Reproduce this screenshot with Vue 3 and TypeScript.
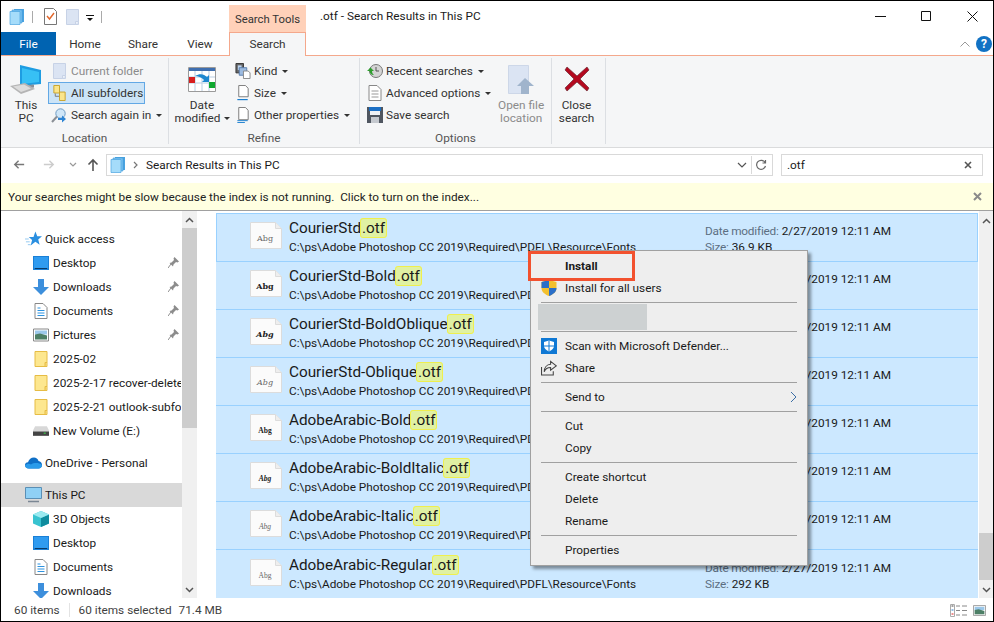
<script setup lang="ts">
const path = 'C:\\ps\\Adobe Photoshop CC 2019\\Required\\PDFL\\Resource\\Fonts'

const quick = [
  { label: 'Desktop', icon: 'desktop', pin: true },
  { label: 'Downloads', icon: 'down', pin: true },
  { label: 'Documents', icon: 'docs', pin: true },
  { label: 'Pictures', icon: 'pics', pin: true },
  { label: '2025-02', icon: 'folder', pin: false },
  { label: '2025-2-17 recover-deleted-files', icon: 'folder', pin: false },
  { label: '2025-2-21 outlook-subfolders', icon: 'folder', pin: false },
  { label: 'New Volume (E:)', icon: 'drive', pin: false },
]

const pcItems = [
  { label: '3D Objects', icon: 'cube' },
  { label: 'Desktop', icon: 'desktop' },
  { label: 'Documents', icon: 'docs' },
  { label: 'Downloads', icon: 'down' },
]

const files = [
  { name: 'CourierStd', size: '36.9 KB', face: 'mono' },
  { name: 'CourierStd-Bold', size: '', face: 'mono bold' },
  { name: 'CourierStd-BoldOblique', size: '', face: 'mono bold oblique' },
  { name: 'CourierStd-Oblique', size: '', face: 'mono oblique' },
  { name: 'AdobeArabic-Bold', size: '', face: 'arabic bold' },
  { name: 'AdobeArabic-BoldItalic', size: '', face: 'arabic bold oblique' },
  { name: 'AdobeArabic-Italic', size: '', face: 'arabic oblique' },
  { name: 'AdobeArabic-Regular', size: '292 KB', face: 'arabic' },
]
</script>

<template>
  <div class="win">
    <svg class="defs" aria-hidden="true">
      <symbol id="i-results" viewBox="0 0 16 16">
        <path d="M5 0h10v13H5z" fill="#4aa3e0" /><path d="M3 1h10v13H3z" fill="#7cc4f2" stroke="#3f9ad8" stroke-width=".6" />
        <path d="M1 2.500h10v13H1z" fill="#a5dcfa" stroke="#4aa3e0" stroke-width=".7" />
      </symbol>
      <symbol id="i-check" viewBox="0 0 13 17">
        <path d="M.5.500h9l3 3v13H.5z" fill="#fff" stroke="#777" /><path d="M3 8l2.500 3L10 5" fill="none" stroke="#e2662a" stroke-width="1.400" />
      </symbol>
      <symbol id="i-page" viewBox="0 0 13 16">
        <path d="M.5.500h12v15H.5z" fill="#dbe4f3" stroke="#c7d2e6" /><path d="M9.500 15.500v-3h3" fill="#eef2f9" stroke="#c7d2e6" />
      </symbol>
      <symbol id="i-pc" viewBox="0 0 34 30">
        <path d="M11 0l21 5v14l-21 2z" fill="#1e9de2" /><path d="M13 3l17 4v10l-17 2z" fill="#37c0f5" />
        <path d="M19 20l6-.6v3l-6 1z" fill="#8a9099" /><path d="M1 21l15-3 10 6-14 5z" fill="#b5b5b5" />
        <path d="M4 21.500l11-2 7 4-10 3.500z" fill="#dcdcdc" />
      </symbol>
      <symbol id="i-subs" viewBox="0 0 13 17">
        <path d="M.5.500h6v8h-6z" fill="#fbe58a" stroke="#c9a227" /><path d="M6.500 7.500h6v9h-6z" fill="#fbe58a" stroke="#c9a227" />
        <path d="M2 9v3h4" fill="none" stroke="#777" />
      </symbol>
      <symbol id="i-again" viewBox="0 0 16 15">
        <circle cx="9.500" cy="5.500" r="4.700" fill="#cfe6f8" stroke="#6f9cc4" /><path d="M6 8.500L1 14" stroke="#8a8f96" stroke-width="2" />
        <path d="M7 10h4V7.500l4 3.500-4 3.500V12H7z" fill="#2d84d4" />
      </symbol>
      <symbol id="i-cal" viewBox="0 0 28 25">
        <path d="M.5.500h27v24H.5z" fill="#fff" stroke="#9a9a9a" /><path d="M1 1h26v3H1z" fill="#3f6fb0" />
        <path d="M1 10h26M1 16h26M7 4v20M14 4v20M21 4v20" stroke="#b9cde2" fill="none" />
        <path d="M1 10h6v6H1z" fill="#d81e1e" /><path d="M21 15h6v6h-6z" fill="#10a82f" />
        <path d="M7 9c5-3 9-2 12 1l2-2v7h-7l2-2c-3-3-6-4-9-4z" fill="#1d87cf" />
      </symbol>
      <symbol id="i-kind" viewBox="0 0 16 17">
        <path d="M.5.500h8v10h-8z" fill="#666" stroke="#333" /><path d="M2.500 2.500h4v5h-4z" fill="#bcd3ee" />
        <path d="M4 5h8v8H4z" fill="#9dbbe0" stroke="#5a7fae" /><path d="M8.500 8.500h5l2 2v6h-7z" fill="#fff" stroke="#888" />
      </symbol>
      <symbol id="i-size" viewBox="0 0 12 17">
        <path d="M1.500.500h7l3 3v9h-10z" fill="#fff" stroke="#777" /><path d="M0 15.500h11" stroke="#1b7fd0" stroke-width="1.300" />
      </symbol>
      <symbol id="i-other" viewBox="0 0 12 17">
        <path d="M1.500.500h7l3 3v10h-10z" fill="#fff" stroke="#777" /><path d="M0 14.500h11M0 16.500h8" stroke="#1b7fd0" />
      </symbol>
      <symbol id="i-recent" viewBox="0 0 16 16">
        <circle cx="9" cy="8" r="6.500" fill="#d4d4d4" stroke="#777" /><path d="M9 4v4h3" fill="none" stroke="#555" />
        <path d="M0 8l3.500-3.500L7 8H5c0 2 1 3 2 4-3 0-4.500-2-4.500-4z" fill="#2e9e2e" />
      </symbol>
      <symbol id="i-adv" viewBox="0 0 13 16">
        <path d="M.5.500h8l4 4v11H.5z" fill="#fff" stroke="#888" /><path d="M3 6h7M3 9h7M3 12h7" stroke="#999" />
      </symbol>
      <symbol id="i-save" viewBox="0 0 16 16">
        <path d="M0 0h16v16H0z" fill="#4f5660" /><path d="M2 0h12v4H2z" fill="#1b6fc4" /><path d="M3 4h10v4H3z" fill="#eef1f5" /><path d="M4 10h8v6H4z" fill="#c5c9cf" />
      </symbol>
      <symbol id="i-open" viewBox="0 0 27 29">
        <path d="M.5.500h20v28H.5z" fill="#dbe4f3" stroke="#cdd7e8" /><path d="M17 13l9 8h-5v8h-8v-8H9z" fill="#a0b4cc" />
      </symbol>
      <symbol id="i-close" viewBox="0 0 26 26">
        <path d="M3 1l10 9 10-9 2 3-9 9 9 9-2 3-10-9-10 9-2-3 9-9-9-9z" fill="#b4091f" stroke="#6d2b33" stroke-width=".7" />
      </symbol>
      <symbol id="i-star" viewBox="0 0 18 16">
        <path d="M11 0l2 5h5l-4 3.500L15.500 14 11 11l-5 4 1.500-6L4 6h5z" fill="#2a8fe0" /><path d="M0 8h4M1 11h4M3 14h3" stroke="#8fc7f0" />
      </symbol>
      <symbol id="i-desktop" viewBox="0 0 16 14">
        <path d="M0 0h16v14H0z" fill="#1a7fd6" /><path d="M1 1h14v11H1z" fill="#2f9bf0" /><path d="M2 12.500h12" stroke="#0a3a66" />
      </symbol>
      <symbol id="i-down" viewBox="0 0 16 16">
        <path d="M5 0h6v8h5l-8 8-8-8h5z" fill="#3d8fdc" />
      </symbol>
      <symbol id="i-docs" viewBox="0 0 13 16">
        <path d="M.5.500h8l4 4v11H.5z" fill="#fff" stroke="#888" /><path d="M3 5h3M3 7.500h7M3 10h7M3 12.500h7" stroke="#2d93e0" />
      </symbol>
      <symbol id="i-pics" viewBox="0 0 16 13">
        <path d="M.5.500h15v12H.5z" fill="#fff" stroke="#888" /><path d="M2 2h12v4H2z" fill="#9cc8ea" /><path d="M2 6l5-1 7 2v4H2z" fill="#4d7f66" />
      </symbol>
      <symbol id="i-folder" viewBox="0 0 13 16">
        <path d="M.5.500h12v15H.5z" fill="#fde78f" stroke="#e6bc45" /><path d="M10.500 15.500v-4h2" fill="#f7d774" stroke="#e6bc45" />
      </symbol>
      <symbol id="i-drive" viewBox="0 0 15 9">
        <path d="M2 0h11l2 4v5H0V4z" fill="#d8d8d8" /><path d="M0 5h15v4H0z" fill="#444" /><path d="M10 6.500h2" stroke="#3dd34a" />
      </symbol>
      <symbol id="i-cloud" viewBox="0 0 17 11">
        <path d="M4 11C1 11 0 9 0 7.500 0 6 1.200 4.800 3 4.800 4 2 6 0 9 0c2 0 4 1.500 4.500 3.500C15.500 3.800 17 5.500 17 7.500S15.500 11 13.500 11z" fill="#0f6fc6" />
        <path d="M4 11C1 11 0 9 0 8c2-2 4-2 6-1 3-2 8-2 11 .5C17 9.500 15.500 11 13.500 11z" fill="#2a9bea" />
      </symbol>
      <symbol id="i-pcsmall" viewBox="0 0 17 16">
        <path d="M.5.500h16v11H.5z" fill="#8fd0f5" stroke="#5a8fb5" /><path d="M3 14.500h11" stroke="#7b8794" stroke-width="1.500" />
      </symbol>
      <symbol id="i-cube" viewBox="0 0 16 16">
        <path d="M8 0l8 3.500v9L8 16 0 12.500v-9z" fill="#38c3d0" /><path d="M8 7l8-3.500v9L8 16z" fill="#0f8c9e" /><path d="M8 0l8 3.500L8 7 0 3.500z" fill="#9beaf0" />
      </symbol>
      <symbol id="i-pin" viewBox="0 0 11 11">
        <path d="M6.500 0L11 4.500 9.500 5.500 8 5 5.500 7.500 5 9.500 1.500 6 3.500 5.500 6 3l-.5-1.500z" fill="#8c8c8c" /><path d="M0 11l3-4" stroke="#8c8c8c" />
      </symbol>
      <symbol id="i-shield" viewBox="0 0 15 16">
        <path d="M7.500 0L15 2v6c0 4-3.500 6.500-7.500 8C3.500 14.500 0 12 0 8V2z" fill="#f3c02e" />
        <path d="M7.500 0L0 2v6h7.500zM7.500 8v8c4-1.500 7.500-4 7.500-8z" fill="#2a6fc9" />
      </symbol>
      <symbol id="i-defender" viewBox="0 0 16 16">
        <path d="M0 0h16v16H0z" fill="#0f78d4" /><path d="M8 2.500l5 1.500v4c0 2.500-2.500 4.500-5 5.500-2.500-1-5-3-5-5.500V4z" fill="#fff" /><path d="M8 2.500v11M3 8h10" stroke="#0f78d4" />
      </symbol>
      <symbol id="i-share" viewBox="0 0 15 14">
        <path d="M.5 6v7.500h11V10" fill="none" stroke="#444" /><path d="M9 .8L14.300 5 9 9V6.600C6 6.600 4 8 3 10.500 3 6.500 5.500 3.800 9 3.500z" fill="none" stroke="#444" />
      </symbol>
    </svg>

    <header class="title-bar">
      <div class="qat">
        <svg class="i16"><use href="#i-results" /></svg>
        <i class="qat-sep"></i>
        <svg class="i-check"><use href="#i-check" /></svg>
        <svg class="i-page-q"><use href="#i-page" /></svg>
        <svg class="qat-drop" viewBox="0 0 8 6"><path d="M0 .5h8" stroke="#111" fill="none" /><path d="M1 3h6L4 6z" fill="#111" /></svg>
        <i class="qat-sep"></i>
      </div>
      <div class="context-tab">Search Tools</div>
      <div class="title">.otf - Search Results in This PC</div>
      <div class="win-btns">
        <svg class="wb" viewBox="0 0 11 11"><path d="M0 5.500h11" stroke="#111" fill="none" /></svg>
        <svg class="wb" viewBox="0 0 11 11"><path d="M.5.500h9v9h-9z" stroke="#111" fill="none" /></svg>
        <svg class="wb" viewBox="0 0 11 11"><path d="M.5.500l10 10M10.500.500l-10 10" stroke="#111" fill="none" /></svg>
      </div>
    </header>

    <nav class="tabs">
      <div class="tab file">File</div>
      <div class="tab home">Home</div>
      <div class="tab share">Share</div>
      <div class="tab view">View</div>
      <div class="tab active">Search</div>
      <div class="tab-end">
        <svg class="collapse" viewBox="0 0 10 6"><path d="M.5 5.500L5 1l4.500 4.500" fill="none" stroke="#999" /></svg>
        <span class="help">?</span>
      </div>
    </nav>

    <section class="ribbon">
      <div class="group g-location">
        <div class="group-body">
          <div class="big b-pc">
            <div class="big-icon"><svg class="pc-ic"><use href="#i-pc" /></svg></div>
            <div>This<br />PC</div>
          </div>
          <div class="smalls">
            <div class="small off"><svg class="s-ic"><use href="#i-page" /></svg>Current folder</div>
            <div class="small on"><svg class="s-ic"><use href="#i-subs" /></svg>All subfolders</div>
            <div class="small again"><svg class="s-ic wide"><use href="#i-again" /></svg>Search again in<span class="caret"></span></div>
          </div>
        </div>
        <div class="group-label">Location</div>
      </div>

      <div class="group g-refine">
        <div class="group-body">
          <div class="big b-date">
            <div class="big-icon"><svg class="cal-ic"><use href="#i-cal" /></svg></div>
            <div>Date<br />modified<span class="caret"></span></div>
          </div>
          <div class="smalls refine">
            <div class="small"><svg class="r-ic"><use href="#i-kind" /></svg>Kind<span class="caret"></span></div>
            <div class="small"><svg class="r-ic"><use href="#i-size" /></svg>Size<span class="caret"></span></div>
            <div class="small"><svg class="r-ic"><use href="#i-other" /></svg>Other properties<span class="caret"></span></div>
          </div>
        </div>
        <div class="group-label">Refine</div>
      </div>

      <div class="group g-options">
        <div class="group-body">
          <div class="smalls options">
            <div class="small"><svg class="r-ic"><use href="#i-recent" /></svg>Recent searches<span class="caret"></span></div>
            <div class="small"><svg class="r-ic"><use href="#i-adv" /></svg>Advanced options<span class="caret"></span></div>
            <div class="small"><svg class="r-ic"><use href="#i-save" /></svg>Save search</div>
          </div>
          <div class="big b-open off">
            <div class="big-icon"><svg class="open-ic"><use href="#i-open" /></svg></div>
            <div>Open file<br />location</div>
          </div>
        </div>
        <div class="group-label">Options</div>
      </div>

      <div class="group g-close">
        <div class="group-body">
          <div class="big b-close">
            <div class="big-icon"><svg class="close-ic"><use href="#i-close" /></svg></div>
            <div>Close<br />search</div>
          </div>
        </div>
      </div>
    </section>

    <section class="nav-row">
      <svg class="nb back" viewBox="0 0 14 12"><path d="M13 6H2M6.500 1.500L2 6l4.500 4.500" fill="none" stroke="#777" stroke-width="1.600" /></svg>
      <svg class="nb fwd" viewBox="0 0 14 12"><path d="M1 6h11M7.500 1.500L12 6l-4.500 4.500" fill="none" stroke="#ccc" stroke-width="1.600" /></svg>
      <svg class="nb hist" viewBox="0 0 8 5"><path d="M1 1l3 3 3-3" fill="none" stroke="#999" stroke-width="1.200" /></svg>
      <svg class="nb up" viewBox="0 0 12 14"><path d="M6 13V2M1.500 6.500L6 2l4.500 4.500" fill="none" stroke="#555" stroke-width="1.600" /></svg>
      <div class="address">
        <svg class="i16 addr-ic"><use href="#i-results" /></svg>
        <svg class="crumb" viewBox="0 0 5 8"><path d="M1 1l3 3-3 3" fill="none" stroke="#777" stroke-width="1.200" /></svg>
        <span class="addr-text">Search Results in This PC</span>
        <svg class="addr-down" viewBox="0 0 10 6"><path d="M1 1l4 4 4-4" fill="none" stroke="#555" stroke-width="1.200" /></svg>
        <i class="addr-div"></i>
        <svg class="refresh" viewBox="0 0 12 12"><path d="M10 3.500A4.500 4.500 0 1 0 10.500 7M10.500 1v3h-3" fill="none" stroke="#666" stroke-width="1.200" /></svg>
      </div>
      <div class="search">
        <span>.otf</span>
        <svg class="search-x" viewBox="0 0 8 8"><path d="M1 1l6 6M7 1L1 7" stroke="#555" stroke-width="1.600" /></svg>
      </div>
    </section>

    <div class="notice">
      <span>Your searches might be slow because the index is not running.&nbsp; Click to turn on the index...</span>
      <svg class="notice-x" viewBox="0 0 9 9"><path d="M1 1l7 7M8 1L1 8" stroke="#8a8a8a" stroke-width="2" /></svg>
    </div>

    <main class="main">
      <aside class="side">
        <div class="tree">
          <div class="node top"><svg class="n-ic star"><use href="#i-star" /></svg><span>Quick access</span></div>
          <div v-for="q in quick" :key="q.label" class="node sub">
            <svg class="n-ic"><use :href="'#i-' + q.icon" /></svg>
            <span class="n-text">{{ q.label }}</span>
            <svg v-if="q.pin" class="pin"><use href="#i-pin" /></svg>
          </div>
          <div class="node top gap"><svg class="n-ic"><use href="#i-cloud" /></svg><span>OneDrive - Personal</span></div>
          <div class="node top gap current"><svg class="n-ic"><use href="#i-pcsmall" /></svg><span>This PC</span></div>
          <div v-for="p in pcItems" :key="p.label" class="node sub">
            <svg class="n-ic"><use :href="'#i-' + p.icon" /></svg>
            <span class="n-text">{{ p.label }}</span>
          </div>
        </div>
        <div class="bar side-bar">
          <svg class="arrow" viewBox="0 0 9 6"><path d="M1 5l3.500-3.500L8 5" fill="none" stroke="#555" stroke-width="1.500" /></svg>
          <div class="thumb side-thumb"></div>
          <div class="track"></div>
          <svg class="arrow" viewBox="0 0 9 6"><path d="M1 1l3.500 3.500L8 1" fill="none" stroke="#555" stroke-width="1.500" /></svg>
        </div>
      </aside>

      <div class="list">
        <div v-for="(f, i) in files" :key="f.name" class="row" :class="{ first: i === 0 }">
          <svg class="font-ic" viewBox="0 0 32 27">
            <path d="M.5.500h25l6 6v20H.5z" fill="#fbfbfb" stroke="#dcdcdc" />
            <path d="M25.500.500v6h6" fill="#eee" stroke="#dcdcdc" />
            <text x="15" y="19" text-anchor="middle" class="abg" :class="f.face">Abg</text>
          </svg>
          <div class="names">
            <div class="fname">{{ f.name }}<span class="hit">.otf</span></div>
            <div class="fpath">{{ path }}</div>
          </div>
          <div class="meta">
            <div class="m-date"><span class="m-key">Date modified:</span> 2/27/2019 12:11 AM</div>
            <div class="m-size"><span class="m-key">Size:</span> {{ f.size }}</div>
          </div>
        </div>
      </div>

      <div class="bar list-bar">
        <svg class="arrow" viewBox="0 0 9 6"><path d="M1 5l3.500-3.500L8 5" fill="none" stroke="#555" stroke-width="1.500" /></svg>
        <div class="track"></div>
        <div class="thumb list-thumb"></div>
        <svg class="arrow" viewBox="0 0 9 6"><path d="M1 1l3.500 3.500L8 1" fill="none" stroke="#555" stroke-width="1.500" /></svg>
      </div>
    </main>

    <footer class="status">
      <span>60 items</span>
      <i class="st-div"></i>
      <span>60 items selected</span>
      <span class="st-size">71.4 MB</span>
      <svg class="st-details" viewBox="0 0 18 13">
        <path d="M.5.500h4v12h-4z" fill="#fff" stroke="#aaa" /><path d="M1.500 2h2" stroke="#444" /><path d="M1.500 6h2" stroke="#2d7fd0" /><path d="M1.500 10h2" stroke="#d22" />
        <path d="M6 2h4M12 2h5M6 6.500h4M12 6.500h5M6 11h4M12 11h5" stroke="#888" />
      </svg>
      <svg class="st-thumb"><use href="#i-pics" /></svg>
    </footer>

    <div class="menu">
      <div class="mi strong">Install</div>
      <div class="mi"><svg class="mi-ic"><use href="#i-shield" /></svg>Install for all users</div>
      <div class="msep"></div>
      <div class="mblur"></div>
      <div class="msep"></div>
      <div class="mi"><svg class="mi-ic"><use href="#i-defender" /></svg>Scan with Microsoft Defender...</div>
      <div class="mi"><svg class="mi-ic"><use href="#i-share" /></svg>Share</div>
      <div class="msep"></div>
      <div class="mi">Send to<svg class="mi-more" viewBox="0 0 7 12"><path d="M1 1l5 5-5 5" fill="none" stroke="#3b6ea5" /></svg></div>
      <div class="msep"></div>
      <div class="mi">Cut</div>
      <div class="mi">Copy</div>
      <div class="msep"></div>
      <div class="mi">Create shortcut</div>
      <div class="mi">Delete</div>
      <div class="mi">Rename</div>
      <div class="msep"></div>
      <div class="mi">Properties</div>
    </div>
    <div class="callout"></div>
  </div>
</template>

<style scoped>
.win {
  position: relative;
  box-sizing: border-box;
  width: 994px;
  height: 622px;
  overflow: hidden;
  display: flex;
  flex-direction: column;
  background: #fff;
  border: 1px solid #000;
  font: 11.8px/16px Roboto, "Liberation Sans", sans-serif;
  color: #1a1a1a;
}
.defs { position: absolute; width: 0; height: 0; }
.i16 { width: 16px; height: 16px; display: block; }

.title-bar { height: 31px; display: flex; flex: none; }
.qat { width: 228px; display: flex; align-items: center; padding-left: 8px; box-sizing: border-box; }
.qat-sep { width: 1px; height: 12px; background: #aaa; margin-left: 7px; }
.i-check { width: 13px; height: 17px; margin-left: 11px; }
.i-page-q { width: 13px; height: 16px; margin-left: 9px; }
.qat-drop { width: 8px; height: 6px; margin-left: 7px; margin-top: 3px; }
.context-tab {
  width: 77px; height: 27px; margin-top: 4px; background: #ffd1b9;
  text-align: center; line-height: 29px; color: #333; font-size: 11.3px;
}
.title { margin-left: 14px; line-height: 30px; flex: 1; }
.win-btns { display: flex; align-items: center; gap: 35px; padding-right: 15px; }
.wb { width: 11px; height: 11px; }

.tabs { height: 24px; display: flex; flex: none; border-bottom: 1px solid #f4a88c; box-sizing: border-box; }
.tab { line-height: 24px; text-align: center; color: #333; }
.file { width: 55px; background: #0063b1; color: #fff; }
.home { width: 58px; }
.share { width: 58px; }
.view { width: 56px; margin-right: 1px; }
.active {
  width: 77px; height: 24px; box-sizing: border-box; background: #f5f6f7;
  border: 1px solid #f4a88c; border-bottom: 0; line-height: 23px;
}
.tab-end { flex: 1; display: flex; justify-content: flex-end; align-items: center; gap: 6px; padding-right: 1px; }
.collapse { width: 10px; height: 6px; }
.help {
  width: 16px; height: 16px; border-radius: 50%; background: #1272c4; color: #fff;
  font-weight: 700; font-size: 12px; line-height: 16px; text-align: center;
}

.ribbon {
  height: 92px; flex: none; box-sizing: border-box; display: flex;
  padding: 2px 0 3px; background: #f5f6f7; border-bottom: 1px solid #dadbdc;
}
.group { display: flex; flex-direction: column; border-right: 1px solid #dcdfe3; box-sizing: border-box; }
.group-body { flex: 1; display: flex; padding-top: 2px; }
.group-label { height: 16px; line-height: 16px; margin-bottom: -2px; text-align: center; color: #555; }
.g-location { width: 168px; }
.g-refine { width: 191px; }
.g-options { width: 192px; }
.g-close { width: 54px; }
.big { text-align: center; line-height: 13px; padding-top: 5px; color: #333; }
.big .caret { margin-left: 3px; }
.big-icon { height: 34px; display: flex; justify-content: center; }
.b-pc { width: 47px; padding-left: 3px; box-sizing: border-box; }
.b-date { width: 66px; }
.b-open { width: 65px; margin-left: auto; }
.b-close { width: 49px; }
.pc-ic { width: 34px; height: 30px; }
.cal-ic { width: 28px; height: 25px; margin-top: 2px; }
.open-ic { width: 27px; height: 29px; }
.close-ic { width: 26px; height: 26px; margin-top: 1px; }
.small { height: 22px; display: flex; align-items: center; padding-left: 5px; color: #333; white-space: nowrap; box-sizing: border-box; }
.small.off, .big.off { color: #8b8b8b; }
.s-ic { width: 13px; height: 16px; margin-right: 5px; }
.s-ic.wide { width: 16px; height: 15px; margin-right: 4px; margin-left: 1px; }
.again { padding-left: 2px; }
.on { width: 97px; background: #cce4f7; border: 1px solid #62a8e5; padding-left: 4px; }
.refine .small { padding-left: 0; }
.r-ic { width: 16px; height: 16px; margin-right: 3px; flex: none; }
.options { padding-left: 7px; }
.options .small { padding-left: 0; }
.caret {
  display: inline-block; margin-left: 5px; vertical-align: 2px;
  border: 3px solid transparent; border-top: 3px solid #333; border-bottom: 0;
}

.nav-row { height: 35px; flex: none; display: flex; align-items: flex-start; padding-top: 6px; box-sizing: border-box; }
.nb { flex: none; margin-top: 5px; }
.back { width: 12px; height: 11px; margin-left: 12px; }
.fwd { width: 12px; height: 11px; margin-left: 18px; }
.hist { width: 8px; height: 5px; margin: 8px 0 0 14px; }
.up { width: 12px; height: 14px; margin-left: 10px; margin-top: 4px; }
.address {
  width: 667px; height: 22px; margin-left: 7px; box-sizing: border-box; border: 1px solid #d9d9d9;
  display: flex; align-items: center; padding-left: 3px;
}
.addr-ic { margin-right: 7px; }
.crumb { width: 5px; height: 8px; margin-right: 8px; }
.addr-text { flex: 1; }
.addr-down { width: 10px; height: 6px; margin-right: 4px; }
.addr-div { width: 1px; height: 18px; background: #d9d9d9; margin-right: 3px; }
.refresh { width: 12px; height: 12px; margin-right: 5px; }
.search {
  width: 202px; height: 22px; margin-left: 8px; box-sizing: border-box; border: 1px solid #d9d9d9;
  display: flex; align-items: center; justify-content: space-between; padding: 0 10px 0 5px;
}
.search-x { width: 8px; height: 8px; }

.notice {
  height: 28px; flex: none; box-sizing: border-box; background: #ffffe1; border-bottom: 1px solid #a0a0a0;
  display: flex; align-items: center; justify-content: space-between; padding: 0 11px 0 7px; color: #222;
}
.notice-x { width: 9px; height: 9px; }

.main { flex: 1; min-height: 0; display: flex; overflow: hidden; }
.side { width: 196px; flex: none; display: flex; }
.tree { width: 181px; flex: none; padding-top: 16px; overflow: hidden; }
.node { height: 24px; display: flex; align-items: center; white-space: nowrap; position: relative; }
.top { padding-left: 24px; }
.sub { padding-left: 32px; margin-right: 1px; }
.gap { margin-top: 8px; }
.current { background: #d9d9d9; width: 180px; }
.n-ic { width: 16px; height: 16px; margin-right: 4px; flex: none; }
.top .n-ic { width: 17px; margin-right: 3px; }
.n-text { overflow: hidden; min-width: 0; }
.pin { position: absolute; left: 167px; top: 6px; width: 11px; height: 11px; }

.bar { display: flex; flex-direction: column; flex: none; background: #f0f0f0; align-items: stretch; }
.arrow { height: 6px; margin: 5.500px 0; width: 9px; align-self: center; flex: none; }
.thumb { background: #cdcdcd; flex: none; }
.track { flex: 1; }
.side-bar { width: 15px; height: 100%; }
.side-thumb { height: 200px; }
.list-bar { width: 14px; }
.list-bar .arrow { margin-top: 7px; }
.list-thumb { height: 47px; }

.list { flex: 1; padding: 2px 0 0 19px; min-width: 0; overflow: hidden; }
.row {
  height: 48px; box-sizing: border-box; display: flex; background: #cce8ff;
  border-bottom: 1px solid #99d1ff; padding-left: 34px; margin-right: 1px;
}
.row:last-child { height: 49px; border-bottom: 0; padding-top: 1px; }
.first { height: 49px; border: 1px solid #99d1ff; padding-left: 33px; }
.font-ic { width: 32px; height: 27px; margin-top: 8px; flex: none; }
.abg { font: 8px "DejaVu Serif", serif; fill: #666; }
.abg.arabic { font: 7.5px "Liberation Serif", serif; }
.abg.bold { font-weight: 700; fill: #222; }
.abg.oblique { font-style: italic; }
.names { width: 416px; margin-left: 7px; flex: none; }
.fname { font-size: 15.3px; line-height: 21px; margin-top: 4px; color: #1a1a1a; }
.hit {
  background: #e0f1a3; border: 1px solid #efef4e; border-radius: 3px;
  padding: 0 1px; margin-left: -1px;
}
.fpath { line-height: 16px; white-space: nowrap; }
.meta { padding-top: 9px; white-space: nowrap; }
.m-key { color: #5c6f82; letter-spacing: -.2px; }

.status { height: 23px; flex: none; display: flex; align-items: center; padding: 1px 0 0 13px; color: #3f3f3f; box-sizing: border-box; }
.st-div { width: 1px; height: 14px; background: #e3e3e3; margin: 0 9px; }
.st-size { margin-left: 7px; flex: 1; }
.st-details { width: 18px; height: 13px; margin-right: 5px; }
.st-thumb { width: 13px; height: 13px; margin-right: 7px; }

.menu {
  position: absolute; left: 529px; top: 249px; width: 278px; box-sizing: border-box;
  background: #eee; border: 1px solid #a0a0a0; padding: 4px 0;
  box-shadow: 3px 3px 3px rgba(0, 0, 0, .4); color: #1a1a1a;
}
.mi { height: 22px; display: flex; align-items: center; padding-left: 34px; position: relative; }
.strong { font-weight: 700; }
.mi-ic { position: absolute; left: 10px; top: 3px; width: 16px; height: 16px; }
.mi-more { width: 7px; height: 12px; margin-left: auto; margin-right: 10px; }
.msep { height: 1px; margin: 3px 10px; background: #a0a0a0; }
.mblur { height: 26px; width: 109px; margin: -2px 0 -2px 7px; background: #cdd1d2; }
.callout {
  position: absolute; left: 527px; top: 250px; width: 107px; height: 30px; box-sizing: border-box;
  border: 3px solid #f2512e;
}
</style>

<style>
html, body { margin: 0; background: #fff; }
</style>
